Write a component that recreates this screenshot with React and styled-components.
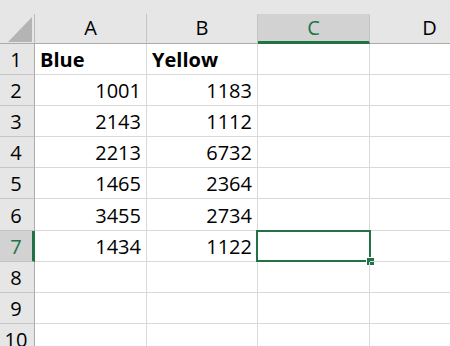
import React from "react";
import styled, { createGlobalStyle } from "styled-components";

const Global = createGlobalStyle`
  html, body { margin: 0; padding: 0; background: #fff; }
  body { font-family: "Open Sans", "Liberation Sans", sans-serif; overflow: hidden; }
`;

const GREEN = "#217346";

const Sheet = styled.div`
  width: 450px;
  height: 346px;
  overflow: hidden;
  background: #fff;
`;

const TopStrip = styled.div`
  height: 14px;
  background: #e6e6e6;
`;

const Grid = styled.div`
  display: grid;
  grid-template-columns: 35px 112px 111px 112px 120px;
  grid-template-rows: 30px 31px 31px 31px 31px 31px 32px 31px 31px 31px 31px;
`;

const Corner = styled.div`
  position: relative;
  background: #e6e6e6;
  border-right: 1px solid #bcbcbc;
  border-bottom: 1px solid #ababab;
  box-sizing: border-box;
`;

const Triangle = styled.svg`
  position: absolute;
  left: 8px;
  top: 3px;
`;

const ColHead = styled.div`
  background: ${(p) => (p.$active ? "#d2d2d2" : "#e6e6e6")};
  color: ${(p) => (p.$active ? GREEN : "#000")};
  border-right: 1px solid #c4c4c4;
  border-bottom: ${(p) => (p.$active ? `3px solid ${GREEN}` : "1px solid #ababab")};
  box-sizing: border-box;
  display: flex;
  align-items: flex-end;
  justify-content: center;
  padding-bottom: ${(p) => (p.$active ? "1px" : "3px")};
  font-size: 20px;
  line-height: 24px;
`;

const RowHead = styled.div`
  background: ${(p) => (p.$active ? "#d2d2d2" : "#e6e6e6")};
  color: ${(p) => (p.$active ? GREEN : "#000")};
  border-right: ${(p) => (p.$active ? `3px solid ${GREEN}` : "1px solid #ababab")};
  border-bottom: 1px solid #c4c4c4;
  box-sizing: border-box;
  display: flex;
  align-items: flex-end;
  justify-content: center;
  padding-right: ${(p) => (p.$active ? "0" : "2px")};
  padding-bottom: 2px;
  font-size: 20px;
  line-height: 24px;
`;

const Cell = styled.div`
  position: relative;
  border-right: 1px solid #d9d9d9;
  border-bottom: 1px solid #d9d9d9;
  box-sizing: border-box;
  display: flex;
  align-items: flex-end;
  justify-content: ${(p) => (p.$num ? "flex-end" : "flex-start")};
  padding: 0 5px 2px 5px;
  font-size: 20px;
  line-height: 24px;
  font-weight: ${(p) => (p.$bold ? 700 : 400)};
  color: #000;
  white-space: nowrap;
`;

const Selection = styled.div`
  position: absolute;
  left: -2px;
  top: -1px;
  right: -2px;
  bottom: -1px;
  border: 2px solid ${GREEN};
  pointer-events: none;
`;

const Handle = styled.div`
  position: absolute;
  right: -5px;
  bottom: -5px;
  width: 7px;
  height: 7px;
  background: ${GREEN};
  border: 1px solid #fff;
  border-right: none;
  border-bottom: none;
`;

const cols = ["A", "B", "C", "D"];
const data = [
  ["Blue", "Yellow"],
  ["1001", "1183"],
  ["2143", "1112"],
  ["2213", "6732"],
  ["1465", "2364"],
  ["3455", "2734"],
  ["1434", "1122"],
  ["", ""],
  ["", ""],
  ["", ""],
];

export default function App() {
  return (
    <Sheet>
      <Global />
      <TopStrip />
      <Grid>
        <Corner>
          <Triangle width="25" height="26" viewBox="0 0 25 26">
            <polygon points="0,25 24,25 24,0" fill="#b4b4b4" />
          </Triangle>
        </Corner>
        {cols.map((c) => (
          <ColHead key={c} $active={c === "C"}>
            {c}
          </ColHead>
        ))}
        {data.map((row, i) => (
          <React.Fragment key={i}>
            <RowHead $active={i === 6}>{i + 1}</RowHead>
            <Cell $bold={i === 0} $num={i > 0}>{row[0]}</Cell>
            <Cell $bold={i === 0} $num={i > 0}>{row[1]}</Cell>
            <Cell>
              {i === 6 && (
                <Selection>
                  <Handle />
                </Selection>
              )}
            </Cell>
            <Cell />
          </React.Fragment>
        ))}
      </Grid>
    </Sheet>
  );
}
